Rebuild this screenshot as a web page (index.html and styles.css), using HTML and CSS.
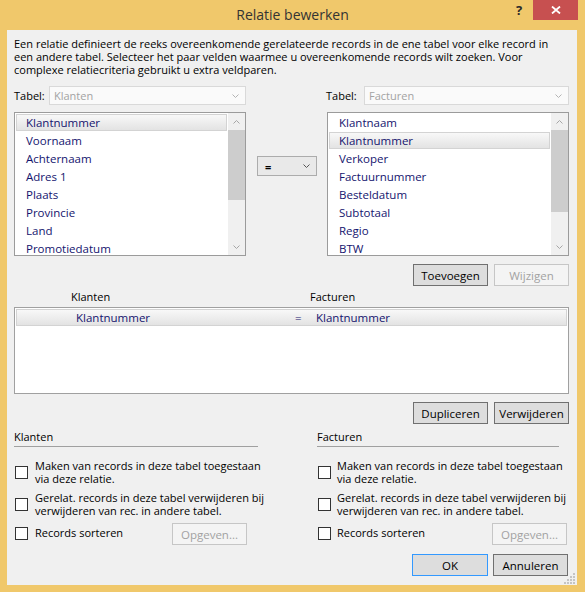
FILE: index.html
```html
<!DOCTYPE html>
<html lang="nl">
<head>
<meta charset="utf-8">
<title>Relatie bewerken</title>
<link rel="stylesheet" href="styles.css">
</head>
<body>
<div class="window">
  <div class="titlebar">
    <div></div>
    <div class="title">Relatie bewerken</div>
    <div class="controls">
      <span class="help">?</span>
      <span class="close"><svg width="10" height="8" viewBox="0 0 10 8"><path d="M1 0.5 L9 7.5 M9 0.5 L1 7.5" stroke="#fff" stroke-width="1.8" fill="none"/></svg></span>
    </div>
  </div>
  <div class="client">
    <p class="desc">Een relatie definieert de reeks overeenkomende gerelateerde records in de ene tabel voor elke record in<br>een andere tabel. Selecteer het paar velden waarmee u overeenkomende records wilt zoeken. Voor<br>complexe relatiecriteria gebruikt u extra veldparen.</p>

    <div class="pick">
      <div class="side side-left">
        <div class="tabelrow">
          <span class="lbl lbl-left">Tabel:</span>
          <div class="select"><span>Klanten</span><svg class="chev" width="7" height="4" viewBox="0 0 7 4"><polyline points="0.5,0.5 3.5,3.5 6.5,0.5" stroke="#b4b4b4" fill="none"/></svg></div>
        </div>
        <div class="list">
          <div class="items">
            <div class="item sel">Klantnummer</div>
            <div class="item">Voornaam</div>
            <div class="item">Achternaam</div>
            <div class="item">Adres 1</div>
            <div class="item">Plaats</div>
            <div class="item">Provincie</div>
            <div class="item">Land</div>
            <div class="item">Promotiedatum</div>
          </div>
          <div class="scroll">
            <div class="arrow"><svg width="7" height="4" viewBox="0 0 7 4"><polyline points="0.5,3.5 3.5,0.5 6.5,3.5" stroke="#a6a6a6" fill="none"/></svg></div>
            <div class="thumb thumb-left"></div>
            <div class="track"></div>
            <div class="arrow"><svg width="7" height="4" viewBox="0 0 7 4"><polyline points="0.5,0.5 3.5,3.5 6.5,0.5" stroke="#a6a6a6" fill="none"/></svg></div>
          </div>
        </div>
      </div>

      <div class="mid">
        <div class="combo"><span>=</span><svg width="7" height="4" viewBox="0 0 7 4"><polyline points="0.5,0.5 3.5,3.5 6.5,0.5" stroke="#555" fill="none"/></svg></div>
      </div>

      <div class="side side-right">
        <div class="tabelrow">
          <span class="lbl lbl-right">Tabel:</span>
          <div class="select"><span>Facturen</span><svg class="chev" width="7" height="4" viewBox="0 0 7 4"><polyline points="0.5,0.5 3.5,3.5 6.5,0.5" stroke="#b4b4b4" fill="none"/></svg></div>
        </div>
        <div class="list">
          <div class="items">
            <div class="item">Klantnaam</div>
            <div class="item sel">Klantnummer</div>
            <div class="item">Verkoper</div>
            <div class="item">Factuurnummer</div>
            <div class="item">Besteldatum</div>
            <div class="item">Subtotaal</div>
            <div class="item">Regio</div>
            <div class="item">BTW</div>
          </div>
          <div class="scroll">
            <div class="arrow"><svg width="7" height="4" viewBox="0 0 7 4"><polyline points="0.5,3.5 3.5,0.5 6.5,3.5" stroke="#a6a6a6" fill="none"/></svg></div>
            <div class="thumb thumb-right"></div>
            <div class="track"></div>
            <div class="arrow"><svg width="7" height="4" viewBox="0 0 7 4"><polyline points="0.5,0.5 3.5,3.5 6.5,0.5" stroke="#a6a6a6" fill="none"/></svg></div>
          </div>
        </div>
        <div class="btnrow">
          <button class="btn">Toevoegen</button>
          <button class="btn" disabled>Wijzigen</button>
        </div>
      </div>
    </div>

    <div class="gridhead"><span class="gh1">Klanten</span><span>Facturen</span></div>
    <div class="gridbox">
      <div class="gridrow"><span class="gc1">Klantnummer</span><span>=</span><span>Klantnummer</span></div>
    </div>
    <div class="btnrow btnrow-wide">
      <button class="btn">Dupliceren</button>
      <button class="btn">Verwijderen</button>
    </div>

    <div class="opts">
      <div class="optcol optcol-left">
        <div class="opthead">Klanten</div>
        <div class="chk chk-first"><span class="box"></span><span class="chktext">Maken van records in deze tabel toegestaan<br>via deze relatie.</span></div>
        <div class="chk"><span class="box"></span><span class="chktext">Gerelat. records in deze tabel verwijderen bij<br>verwijderen van rec. in andere tabel.</span></div>
        <div class="sortrow sortrow-left">
          <div class="chk chk-sort"><span class="box"></span><span class="chktext">Records sorteren</span></div>
          <button class="btn" disabled>Opgeven...</button>
        </div>
      </div>
      <div class="optcol optcol-right">
        <div class="opthead">Facturen</div>
        <div class="chk chk-first"><span class="box"></span><span class="chktext">Maken van records in deze tabel toegestaan<br>via deze relatie.</span></div>
        <div class="chk"><span class="box"></span><span class="chktext">Gerelat. records in deze tabel verwijderen bij<br>verwijderen van rec. in andere tabel.</span></div>
        <div class="sortrow sortrow-right">
          <div class="chk chk-sort"><span class="box"></span><span class="chktext">Records sorteren</span></div>
          <button class="btn" disabled>Opgeven...</button>
        </div>
      </div>
    </div>

    <div class="okrow">
      <button class="btn btn-default">OK</button>
      <button class="btn">Annuleren</button>
    </div>

    <svg class="grip" width="12" height="12" viewBox="0 0 12 12">
      <g fill="#c4c4c4">
        <rect x="9" y="1" width="2" height="2"/>
        <rect x="6" y="4" width="2" height="2"/><rect x="9" y="4" width="2" height="2"/>
        <rect x="3" y="7" width="2" height="2"/><rect x="6" y="7" width="2" height="2"/><rect x="9" y="7" width="2" height="2"/>
        <rect x="0" y="10" width="2" height="2"/><rect x="3" y="10" width="2" height="2"/><rect x="6" y="10" width="2" height="2"/><rect x="9" y="10" width="2" height="2"/>
      </g>
    </svg>
  </div>
</div>
</body>
</html>
```

FILE: styles.css
```css
* { box-sizing: border-box; }
html, body { margin: 0; padding: 0; }
body {
  width: 585px;
  height: 592px;
  overflow: hidden;
  background: #f0c86b;
  font-family: "Open Sans", "Noto Sans", sans-serif;
  font-size: 11px;
  color: #000;
}
.window {
  display: flex;
  flex-direction: column;
  height: 592px;
  background: #f0c86b;
}
.titlebar {
  height: 30px;
  flex: none;
  display: grid;
  grid-template-columns: 1fr auto 1fr;
  align-items: start;
}
.title {
  font-size: 14px;
  line-height: 29px;
  color: #333;
}
.controls {
  justify-self: end;
  display: flex;
  margin-right: 7px;
}
.help {
  width: 28px;
  height: 20px;
  line-height: 20px;
  text-align: center;
  font-weight: bold;
  font-size: 13px;
  color: #2a2a2a;
}
.close {
  width: 45px;
  height: 20px;
  background: #c75050;
  display: flex;
  align-items: center;
  justify-content: center;
}
.client {
  flex: 1;
  margin: 0 8px 7px 7px;
  background: #f0f0f0;
  padding: 7px 8px 0 7px;
  display: flex;
  flex-direction: column;
  position: relative;
}
.desc {
  margin: 0;
  line-height: 13px;
  white-space: nowrap;
}
.pick {
  display: flex;
  margin-top: 10px;
}
.side { display: flex; flex-direction: column; }
.side-left { width: 232px; }
.side-right { width: 242px; margin-left: 10px; }
.mid { width: 60px; margin-left: 11px; padding-top: 70px; }
.tabelrow {
  display: flex;
  height: 19px;
}
.lbl { line-height: 19px; flex: none; }
.lbl-left { width: 35px; }
.lbl-right { width: 38px; margin-left: -1px; }
.select {
  flex: 1;
  border: 1px solid #d9d9d9;
  background: #fafafa;
  color: #a3a3a3;
  display: flex;
  align-items: center;
  justify-content: space-between;
  padding: 0 6px 0 4px;
  line-height: 17px;
}
.list {
  margin-top: 7px;
  height: 144px;
  border: 1px solid #9b9b9b;
  background: #fff;
  display: flex;
}
.items {
  flex: 1;
  padding-top: 1px;
  overflow: hidden;
}
.item {
  height: 18px;
  line-height: 16px;
  margin: 0 1px;
  padding-left: 9px;
  border: 1px solid transparent;
  color: #14146e;
  font-size: 11.5px;
  white-space: nowrap;
}
.item.sel {
  height: 17px;
  margin-bottom: 1px;
  border-color: #d3d3d3;
  background: linear-gradient(#f8f8f8, #e3e3e3);
}
.scroll {
  width: 17px;
  display: flex;
  flex-direction: column;
  background: #f0f0f0;
}
.arrow {
  height: 17px;
  display: flex;
  align-items: center;
  justify-content: center;
  flex: none;
}
.thumb { background: #cdcdcd; flex: none; }
.thumb-left { height: 70px; }
.thumb-right { height: 82px; }
.track { flex: 1; }
.combo {
  height: 20px;
  border: 1px solid #acacac;
  background: #e9e9e9;
  display: flex;
  align-items: center;
  justify-content: space-between;
  padding: 0 6px 0 7px;
  font-weight: bold;
}
.btnrow {
  display: flex;
  justify-content: flex-end;
  gap: 6px;
  margin-top: 8px;
}
.btn {
  width: 75px;
  height: 22px;
  padding: 0;
  font-family: inherit;
  font-size: 11.5px;
  color: #000;
  background: #dddddd;
  border: 1px solid #707070;
  border-radius: 0;
}
.btn:disabled {
  background: #f4f4f4;
  border-color: #c6c6c6;
  color: #a2a2a2;
}
.btn-default { border-color: #3399ff; width: 76px; }
.gridhead {
  display: grid;
  grid-template-columns: 296px 1fr;
  margin-top: 3px;
  line-height: 16px;
  height: 16px;
}
.gh1 { padding-left: 57px; }
.gridbox {
  margin-top: 2px;
  height: 87px;
  border: 1px solid #a0a0a0;
  background: #fff;
  padding: 1px;
}
.gridrow {
  height: 17px;
  border: 1px solid #d3d3d3;
  background: linear-gradient(#f8f8f8, #e3e3e3);
  display: grid;
  grid-template-columns: 278px 21px 1fr;
  line-height: 15px;
  color: #14146e;
  font-size: 11.5px;
}
.gc1 { padding-left: 59px; }
.btnrow-wide { margin-top: 8px; }
.opts {
  display: flex;
  margin-top: 6px;
}
.optcol { display: flex; flex-direction: column; }
.optcol-left { width: 244px; }
.optcol-right { width: 252px; margin-left: 59px; }
.opthead {
  line-height: 14px;
  padding-bottom: 2px;
  border-bottom: 1px solid #a0a0a0;
  width: 244px;
}
.optcol-right .opthead { width: 242px; }
.chk {
  display: flex;
  align-items: center;
  margin-top: 6px;
  padding-left: 1px;
}
.chk-first { margin-top: 12px; }
.box {
  width: 13px;
  height: 13px;
  border: 1px solid #333;
  background: #fff;
  flex: none;
  margin-right: 7px;
}
.optcol-right .box { margin-right: 6px; }
.chktext {
  line-height: 13px;
  white-space: nowrap;
}
.sortrow {
  display: flex;
  align-items: flex-start;
  justify-content: space-between;
  margin-top: 6px;
}
.sortrow-left { width: 233px; }
.sortrow-right { width: 250px; }
.chk-sort { margin-top: 3px; align-items: flex-start; }
.chk-sort .box { margin-top: 1px; }
.okrow {
  display: flex;
  justify-content: flex-end;
  gap: 5px;
  margin-top: 9px;
  padding-right: 1px;
}
.grip {
  position: absolute;
  right: 1px;
  bottom: 1px;
}
```
